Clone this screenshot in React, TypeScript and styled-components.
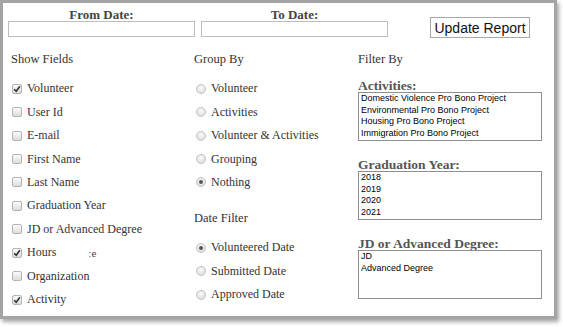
import React from "react";
import styled, { createGlobalStyle } from "styled-components";

const Global = createGlobalStyle`
  html, body { margin: 0; padding: 0; background: #fff; }
  body { width: 563px; height: 327px; overflow: hidden; }
`;

const Frame = styled.div`
  box-sizing: border-box;
  width: 557px;
  height: 319px;
  border: 3px solid #a4a4a4;
  background: #fff;
  box-shadow: 2px 3px 4px rgba(0, 0, 0, 0.35);
  padding: 5px 0 0 5px;
  font-family: "Liberation Serif", "Times New Roman", serif;
  color: #333;
`;

const TopRow = styled.div`
  display: flex;
  align-items: flex-start;
`;

const DateField = styled.div`
  display: flex;
  flex-direction: column;
  align-items: center;
  width: 187px;
  margin-right: 6px;
`;

const DateLabel = styled.div`
  font-weight: bold;
  font-size: 13px;
  line-height: 14px;
  color: #444;
  height: 13px;
`;

const DateInput = styled.div`
  box-sizing: border-box;
  width: 100%;
  height: 16px;
  border: 1px solid #bdbdbd;
  background: #fff;
`;

const UpdateButton = styled.button`
  box-sizing: border-box;
  margin: 9px 0 0 36px;
  height: 21px;
  width: 100px;
  padding: 0;
  border: 1px solid #a9a9a9;
  background: #fff;
  font-family: "Liberation Sans", Arial, sans-serif;
  font-size: 14px;
  color: #111;
`;

const Columns = styled.div`
  display: grid;
  grid-template-columns: 183px 164px 190px;
  margin-top: 14px;
  padding-left: 3px;
`;

const Column = styled.div`
  display: flex;
  flex-direction: column;
`;

const SectionTitle = styled.div<{ $top?: number; $bottom?: number }>`
  font-size: 12.5px;
  line-height: 15px;
  height: 15px;
  margin-top: ${(p) => p.$top ?? 0}px;
  margin-bottom: ${(p) => p.$bottom ?? 10}px;
  color: #333;
`;

const Row = styled.label`
  display: flex;
  align-items: center;
  height: 23.45px;
  font-size: 12px;
  color: #333;
  white-space: nowrap;
`;

const Box = styled.span`
  box-sizing: border-box;
  position: relative;
  display: inline-block;
  width: 10px;
  height: 10px;
  margin: 0 5px 0 1px;
  border: 1px solid #b3b3b3;
  border-radius: 2px;
  background: linear-gradient(#fcfcfc, #dcdcdc);
`;

const Tick = styled.svg`
  position: absolute;
  left: 0;
  top: 0;
`;

const Radio = styled.span<{ $on?: boolean }>`
  box-sizing: border-box;
  position: relative;
  display: inline-block;
  width: 10px;
  height: 10px;
  margin: 0 5px 0 2px;
  border: 1px solid #c2c2c2;
  border-radius: 50%;
  background: radial-gradient(circle at 50% 35%, #fafafa, #d8d8d8);
  &::after {
    content: "";
    display: ${(p) => (p.$on ? "block" : "none")};
    position: absolute;
    left: 2px;
    top: 2px;
    width: 4px;
    height: 4px;
    border-radius: 50%;
    background: #555;
  }
`;

const Ghost = styled.span`
  margin-left: 32px;
  font-size: 11px;
  color: #444;
`;

const FilterTitle = styled.div`
  font-weight: bold;
  font-size: 13.5px;
  line-height: 12px;
  height: 12px;
  color: #555;
`;

const ListBox = styled.div`
  box-sizing: border-box;
  width: 184px;
  height: 49px;
  border: 1px solid #8f8f8f;
  padding: 0 2px;
  margin-bottom: 18px;
  font-family: "Liberation Sans", Arial, sans-serif;
  font-size: 9px;
  line-height: 11.7px;
  color: #000;
  overflow: hidden;
`;

const fields: [string, boolean][] = [
  ["Volunteer", true],
  ["User Id", false],
  ["E-mail", false],
  ["First Name", false],
  ["Last Name", false],
  ["Graduation Year", false],
  ["JD or Advanced Degree", false],
  ["Hours", true],
  ["Organization", false],
  ["Activity", true],
];

const groups: [string, boolean][] = [
  ["Volunteer", false],
  ["Activities", false],
  ["Volunteer & Activities", false],
  ["Grouping", false],
  ["Nothing", true],
];

const dates: [string, boolean][] = [
  ["Volunteered Date", true],
  ["Submitted Date", false],
  ["Approved Date", false],
];

const Check = ({ on }: { on: boolean }) => (
  <Box>
    {on && (
      <Tick width="8" height="8" viewBox="0 0 8 8">
        <path d="M1.2 4.2 L3.2 6.3 L6.9 1.3" stroke="#333" strokeWidth="1.6" fill="none" />
      </Tick>
    )}
  </Box>
);

export default function App() {
  return (
    <>
      <Global />
      <Frame>
        <TopRow>
          <DateField>
            <DateLabel>From Date:</DateLabel>
            <DateInput />
          </DateField>
          <DateField>
            <DateLabel>To Date:</DateLabel>
            <DateInput />
          </DateField>
          <UpdateButton>Update Report</UpdateButton>
        </TopRow>
        <Columns>
          <Column>
            <SectionTitle>Show Fields</SectionTitle>
            {fields.map(([name, on]) => (
              <Row key={name}>
                <Check on={on} />
                {name}
                {name === "Hours" && <Ghost>ːe</Ghost>}
              </Row>
            ))}
          </Column>
          <Column>
            <SectionTitle>Group By</SectionTitle>
            {groups.map(([name, on]) => (
              <Row key={name}>
                <Radio $on={on} />
                {name}
              </Row>
            ))}
            <SectionTitle $top={17}>Date Filter</SectionTitle>
            {dates.map(([name, on]) => (
              <Row key={name}>
                <Radio $on={on} />
                {name}
              </Row>
            ))}
          </Column>
          <Column>
            <SectionTitle $bottom={13}>Filter By</SectionTitle>
            <FilterTitle>Activities:</FilterTitle>
            <ListBox>
              <div>Domestic Violence Pro Bono Project</div>
              <div>Environmental Pro Bono Project</div>
              <div>Housing Pro Bono Project</div>
              <div>Immigration Pro Bono Project</div>
            </ListBox>
            <FilterTitle>Graduation Year:</FilterTitle>
            <ListBox>
              <div>2018</div>
              <div>2019</div>
              <div>2020</div>
              <div>2021</div>
            </ListBox>
            <FilterTitle>JD or Advanced Degree:</FilterTitle>
            <ListBox>
              <div>JD</div>
              <div>Advanced Degree</div>
            </ListBox>
          </Column>
        </Columns>
      </Frame>
    </>
  );
}
